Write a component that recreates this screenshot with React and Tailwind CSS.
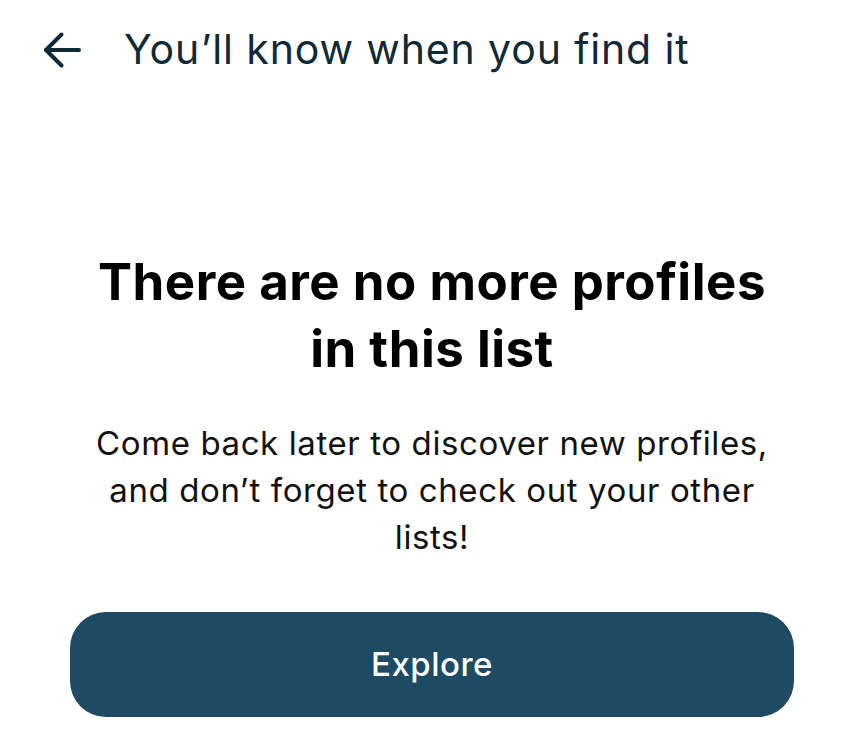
import React from 'react';

const App = () => {
  return (
    <div className="w-[864px] h-[755px] bg-white overflow-hidden font-['Inter',sans-serif]">
      <header className="flex items-start pt-[24px] pl-[42px]">
        <button className="mt-[6px] w-[40px] h-[40px] flex items-center justify-center text-[#0f2a36]">
          <svg width="40" height="40" viewBox="0 0 40 40" fill="none" stroke="currentColor" strokeWidth="4" strokeLinecap="round" strokeLinejoin="round">
            <path d="M37 20H4" />
            <path d="M19.5 4.5L4 20l15.5 15.5" />
          </svg>
        </button>
        <h1 className="ml-[42px] text-[41px] leading-[50px] text-[#0f2a36] tracking-[0.87px]">You’ll know when you find it</h1>
      </header>

      <main className="flex flex-col items-center px-[70px] pt-[174px]">
        <h2 className="text-[51px] leading-[67px] font-bold text-black text-center tracking-[0.5px]">
          There are no more profiles<br />in this list
        </h2>
        <p className="mt-[38px] text-[33px] leading-[47px] text-[#111] text-center max-w-[700px] tracking-[0.6px]">
          Come back later to discover new profiles, and don’t forget to check out your other lists!
        </p>
        <button className="mt-[51px] w-full h-[105px] rounded-[36px] bg-[#1f4a63] text-white text-[33px] font-medium tracking-[0.5px]">
          Explore
        </button>
      </main>
    </div>
  );
};

export default App;
